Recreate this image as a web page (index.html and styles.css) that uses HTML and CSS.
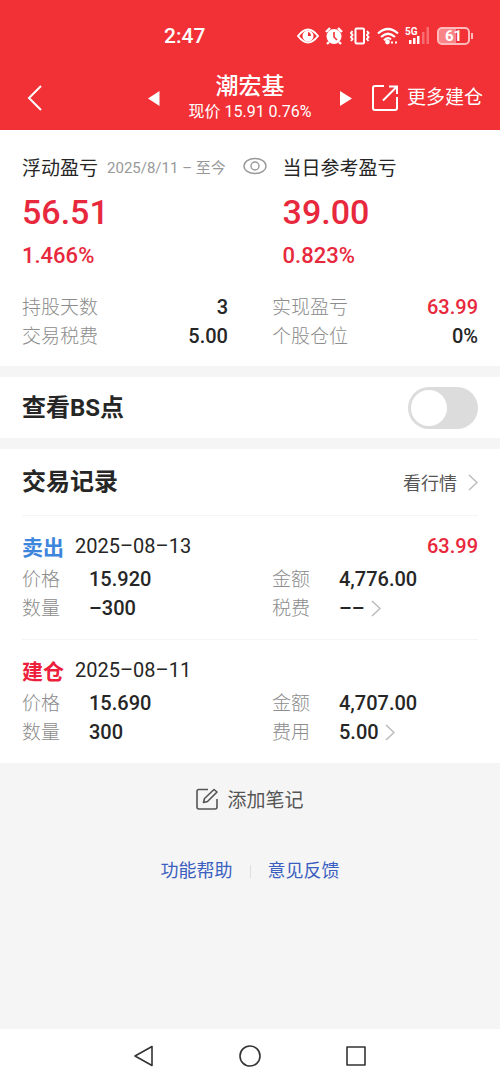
FILE: index.html
```html
<!DOCTYPE html>
<html lang="zh-CN">
<head>
<meta charset="utf-8">
<meta name="viewport" content="width=device-width, initial-scale=1">
<title>潮宏基</title>
<link rel="stylesheet" href="styles.css">
</head>
<body>
<header class="top">
  <div class="status">
    <time class="clock">2:47</time>
    <div class="status-icons">
      <svg width="22" height="18" viewBox="0 0 22 18"><path d="M1 9Q11-4 21 9Q11 22 1 9Z" fill="none" stroke="#fff" stroke-width="2"/><circle cx="11" cy="9" r="5.500" fill="#fff"/><path d="M11 9V5a4 4 0 0 1 3 4Z" fill="#f13136"/></svg>
      <svg width="18" height="18" viewBox="0 0 18 18"><circle cx="9" cy="9.500" r="7.500" fill="#fff"/><path d="M1 5l4-4M17 5l-4-4M4 15l-2 2M14 15l2 2" stroke="#fff" stroke-width="2.400"/><path d="M9 5v5l3 3" fill="none" stroke="#f13136" stroke-width="1.600"/></svg>
      <svg width="22" height="18" viewBox="0 0 22 18" fill="none" stroke="#fff" stroke-width="2"><rect x="6.500" y="1.500" width="8.500" height="15" rx="1"/><path d="M3.500 4L2 6l1.500 2L2 10l1.500 2L2 14M18 4l1.500 2L18 8l1.500 2L18 12l1.500 2"/></svg>
      <svg width="22" height="18" viewBox="0 0 22 18" fill="none" stroke="#fff" stroke-width="2.200"><path d="M1 6.500Q11-2.500 21 6.500M4 10Q11 3.500 18 10M7 13.300Q11 9.500 14 12.500"/><circle cx="10.500" cy="15" r="1.300" fill="#fff"/><path d="M14 15.500h2M18 15.500h2"/></svg>
      <svg class="signal" width="25" height="20" viewBox="0 0 25 20"><text x="0" y="9" font-size="10" font-weight="700" fill="#fff">5G</text><g fill="#fff"><rect x="4" y="14" width="2.500" height="4"/><rect x="8" y="12" width="2.500" height="6"/><rect x="12" y="10" width="2.500" height="8"/></g><g fill="#f76d70"><rect x="17" y="6" width="2.500" height="12"/><rect x="21.500" y="1" width="2.500" height="17"/></g></svg>
      <span class="battery">61</span>
    </div>
  </div>
  <div class="titlebar">
    <button class="plain back" aria-label="返回"><svg width="16" height="26" viewBox="0 0 16 26" fill="none" stroke="#fff" stroke-width="2"><path d="M14 1L2 13l12 12"/></svg></button>
    <div class="stock">
      <button class="plain" aria-label="上一只"><svg width="12" height="15" viewBox="0 0 12 15"><path d="M11.500 0v15L0 7.500Z" fill="#fff"/></svg></button>
      <div class="stock-name">
        <h1>潮宏基</h1>
        <p>现价 15.91 0.76%</p>
      </div>
      <button class="plain" aria-label="下一只"><svg width="12" height="15" viewBox="0 0 12 15"><path d="M0 0v15l12-7.500Z" fill="#fff"/></svg></button>
    </div>
    <button class="plain more"><svg width="26" height="26" viewBox="0 0 26 26" fill="none" stroke="#fff" stroke-width="2"><path d="M12 1H3Q1 1 1 3v20q0 2 2 2h20q2 0 2-2V12M17 1.500h8V9M24.500 2L11 15.500"/></svg>更多建仓</button>
  </div>
</header>

<main>
  <section class="panel summary">
    <div class="profits">
      <div>
        <div class="profit-title"><h2>浮动盈亏</h2><span class="period">2025/8/11 – 至今</span>
          <button class="plain eye" aria-label="隐藏金额"><svg width="24" height="18" viewBox="0 0 24 18" fill="none" stroke="#999" stroke-width="1.400"><ellipse cx="12" cy="9" rx="11" ry="7.500"/><circle cx="12" cy="9" r="4"/></svg></button></div>
        <p class="amount">56.51</p>
        <p class="percent">1.466%</p>
      </div>
      <div>
        <div class="profit-title"><h2>当日参考盈亏</h2></div>
        <p class="amount">39.00</p>
        <p class="percent">0.823%</p>
      </div>
    </div>
    <dl class="pairs spread">
      <div><dt>持股天数</dt><dd>3</dd></div>
      <div><dt>实现盈亏</dt><dd class="red">63.99</dd></div>
      <div><dt>交易税费</dt><dd>5.00</dd></div>
      <div><dt>个股仓位</dt><dd>0%</dd></div>
    </dl>
  </section>

  <section class="panel switch-row">
    <label class="heading" for="bs">查看BS点</label>
    <input class="switch" type="checkbox" role="switch" id="bs">
  </section>

  <section class="panel records">
    <div class="records-head">
      <h2 class="heading">交易记录</h2>
      <a class="quote" href="#">看行情<svg width="10" height="17" viewBox="0 0 10 17" fill="none" stroke="#bbb" stroke-width="1.500"><path d="M1 1l8 7.500L1 16"/></svg></a>
    </div>
    <article class="record">
      <div class="record-title"><h3 class="sell">卖出</h3><time>2025–08–13</time><span class="gain">63.99</span></div>
      <dl class="pairs">
        <div><dt>价格</dt><dd>15.920</dd></div>
        <div><dt>金额</dt><dd>4,776.00</dd></div>
        <div><dt>数量</dt><dd>–300</dd></div>
        <div><dt>税费</dt><dd>––<svg width="10" height="17" viewBox="0 0 10 17" fill="none" stroke="#bbb" stroke-width="1.500"><path d="M1 1l8 7.500L1 16"/></svg></dd></div>
      </dl>
    </article>
    <article class="record">
      <div class="record-title"><h3 class="buy">建仓</h3><time>2025–08–11</time></div>
      <dl class="pairs">
        <div><dt>价格</dt><dd>15.690</dd></div>
        <div><dt>金额</dt><dd>4,707.00</dd></div>
        <div><dt>数量</dt><dd>300</dd></div>
        <div><dt>费用</dt><dd>5.00<svg width="10" height="17" viewBox="0 0 10 17" fill="none" stroke="#bbb" stroke-width="1.500"><path d="M1 1l8 7.500L1 16"/></svg></dd></div>
      </dl>
    </article>
  </section>

  <button class="plain note"><svg width="22" height="22" viewBox="0 0 22 22" fill="none" stroke="#555" stroke-width="1.600" stroke-linejoin="round"><path d="M12 1.500H3Q1 1.500 1 3.500V19q0 2 2 2h16q2 0 2-2v-8"/><path d="M7.500 14.500l1-4L18 1.500l3 2.500L11.500 13.500Z"/></svg>添加笔记</button>
  <div class="links"><a href="#">功能帮助</a><span class="rule"></span><a href="#">意见反馈</a></div>
</main>

<nav class="system">
  <button class="plain" aria-label="返回"><svg width="22" height="22" viewBox="0 0 22 22"><path d="M19 1.500v19L2 11Z"/></svg></button>
  <button class="plain" aria-label="主页"><svg width="22" height="22" viewBox="0 0 22 22"><circle cx="11" cy="11" r="10"/></svg></button>
  <button class="plain" aria-label="最近任务"><svg width="22" height="22" viewBox="0 0 22 22"><rect x="2" y="2" width="18" height="18"/></svg></button>
</nav>
</body>
</html>
```

FILE: styles.css
```css
* { box-sizing: border-box; margin: 0; padding: 0; }

body {
  min-height: 100vh;
  display: flex;
  flex-direction: column;
  background: #f5f5f5;
  color: #262626;
  font-family: Roboto, "Noto Sans CJK SC", sans-serif;
  font-size: 20px;
}

svg { display: block; flex: none; }
a { text-decoration: none; }
.plain { border: 0; background: none; color: inherit; font: inherit; cursor: pointer; }

.top { background: #f13136; color: #fff; }
.status {
  height: 72px;
  padding: 0 27px 0 164px;
  display: flex;
  align-items: center;
  justify-content: space-between;
}
.clock { font-size: 21px; font-weight: 500; }
.status-icons { display: flex; align-items: center; gap: 6px; }
.signal { font-family: Roboto, sans-serif; }
.battery {
  position: relative;
  width: 33px;
  height: 18px;
  margin: 0 3px 0 1px;
  border: 2px solid #fbb;
  border-radius: 5px;
  background: linear-gradient(90deg, #f98487 60%, #f13136 60%);
  font-size: 15px;
  font-weight: 700;
  line-height: 14px;
  text-align: center;
}
.battery::after {
  content: "";
  position: absolute;
  top: 4px;
  right: -5px;
  width: 2px;
  height: 6px;
  background: #fbb;
}
.titlebar {
  display: grid;
  grid-template-columns: 1fr auto 1fr;
  align-items: center;
  padding: 1px 17px 7px 27px;
}
.back { justify-self: start; }
.stock { display: flex; align-items: center; gap: 28px; margin-right: 10px; }
.stock-name { text-align: center; white-space: nowrap; }
.stock-name h1 { font-size: 23px; font-weight: 500; line-height: 28px; }
.stock-name p { font-size: 16px; line-height: 22px; }
.more {
  justify-self: end;
  display: flex;
  align-items: center;
  gap: 9px;
  font-size: 19px;
  line-height: 26px;
  white-space: nowrap;
}

main { flex: 1; }
.panel { background: #fff; padding: 0 22px; margin-bottom: 11px; }

.summary { padding-top: 23px; padding-bottom: 15px; }
.profits { display: grid; grid-template-columns: 4fr 3fr; margin-bottom: 22px; }
.profit-title { display: flex; align-items: center; height: 26px; margin-bottom: 11px; white-space: nowrap; }
.profit-title h2 { font-size: 19px; font-weight: 400; }
.period { margin-left: 9px; color: #999; font-size: 15px; }
.eye { margin-left: 17px; }
.amount { color: #e8283c; font-size: 34px; font-weight: 500; line-height: 44px; margin-bottom: 7px; }
.percent { color: #e8283c; font-size: 22px; font-weight: 500; line-height: 30px; }

.pairs { display: grid; grid-template-columns: 1fr 1fr; column-gap: 44px; line-height: 29px; }
.pairs div { display: flex; align-items: center; }
.pairs dt { width: 67px; color: #8c8c8c; font-size: 19px; font-weight: 300; }
.pairs dd { display: flex; align-items: center; gap: 6px; font-weight: 500; }
.spread div { justify-content: space-between; }
.spread dt { width: auto; }
.spread .red { color: #e8283c; }

.heading { font-size: 24px; font-weight: 700; line-height: 36px; }
.switch-row { display: flex; align-items: center; justify-content: space-between; padding-top: 10px; padding-bottom: 9px; }
.switch {
  appearance: none;
  width: 70px;
  height: 42px;
  padding: 3px;
  border-radius: 21px;
  background: #dcdcdc;
  cursor: pointer;
}
.switch::before {
  content: "";
  display: block;
  width: 36px;
  height: 36px;
  border-radius: 50%;
  background: #fff;
}
.switch:checked { background: #f13136; }
.switch:checked::before { margin-left: 28px; }

.records { margin-bottom: 0; }
.records-head { height: 66px; display: flex; align-items: center; justify-content: space-between; }
.quote { display: flex; align-items: center; gap: 11px; color: #555; font-size: 18px; }
.record { padding: 15px 0 16px; border-top: 1px solid #f5f5f5; }
.record-title { display: flex; align-items: center; gap: 11px; height: 29px; margin-bottom: 5px; }
.record-title h3 { font-size: 21px; font-weight: 700; }
.sell { color: #3d86dc; }
.buy { color: #ec1f3c; }
.gain { margin-left: auto; color: #e8283c; font-weight: 500; }

.note {
  display: flex;
  align-items: center;
  gap: 9px;
  margin: 22px auto 46px;
  color: #555;
  font-size: 19px;
}
.links { display: flex; justify-content: center; align-items: center; gap: 17px; font-size: 18px; line-height: 26px; }
.links a { color: #3b5fc0; }
.rule { width: 1px; height: 13px; background: #dedede; }

.system {
  display: flex;
  justify-content: center;
  gap: 84px;
  padding: 16px;
  background: #fff;
}
.system svg { fill: none; stroke: #333; stroke-width: 1.600; stroke-linejoin: round; }
```
